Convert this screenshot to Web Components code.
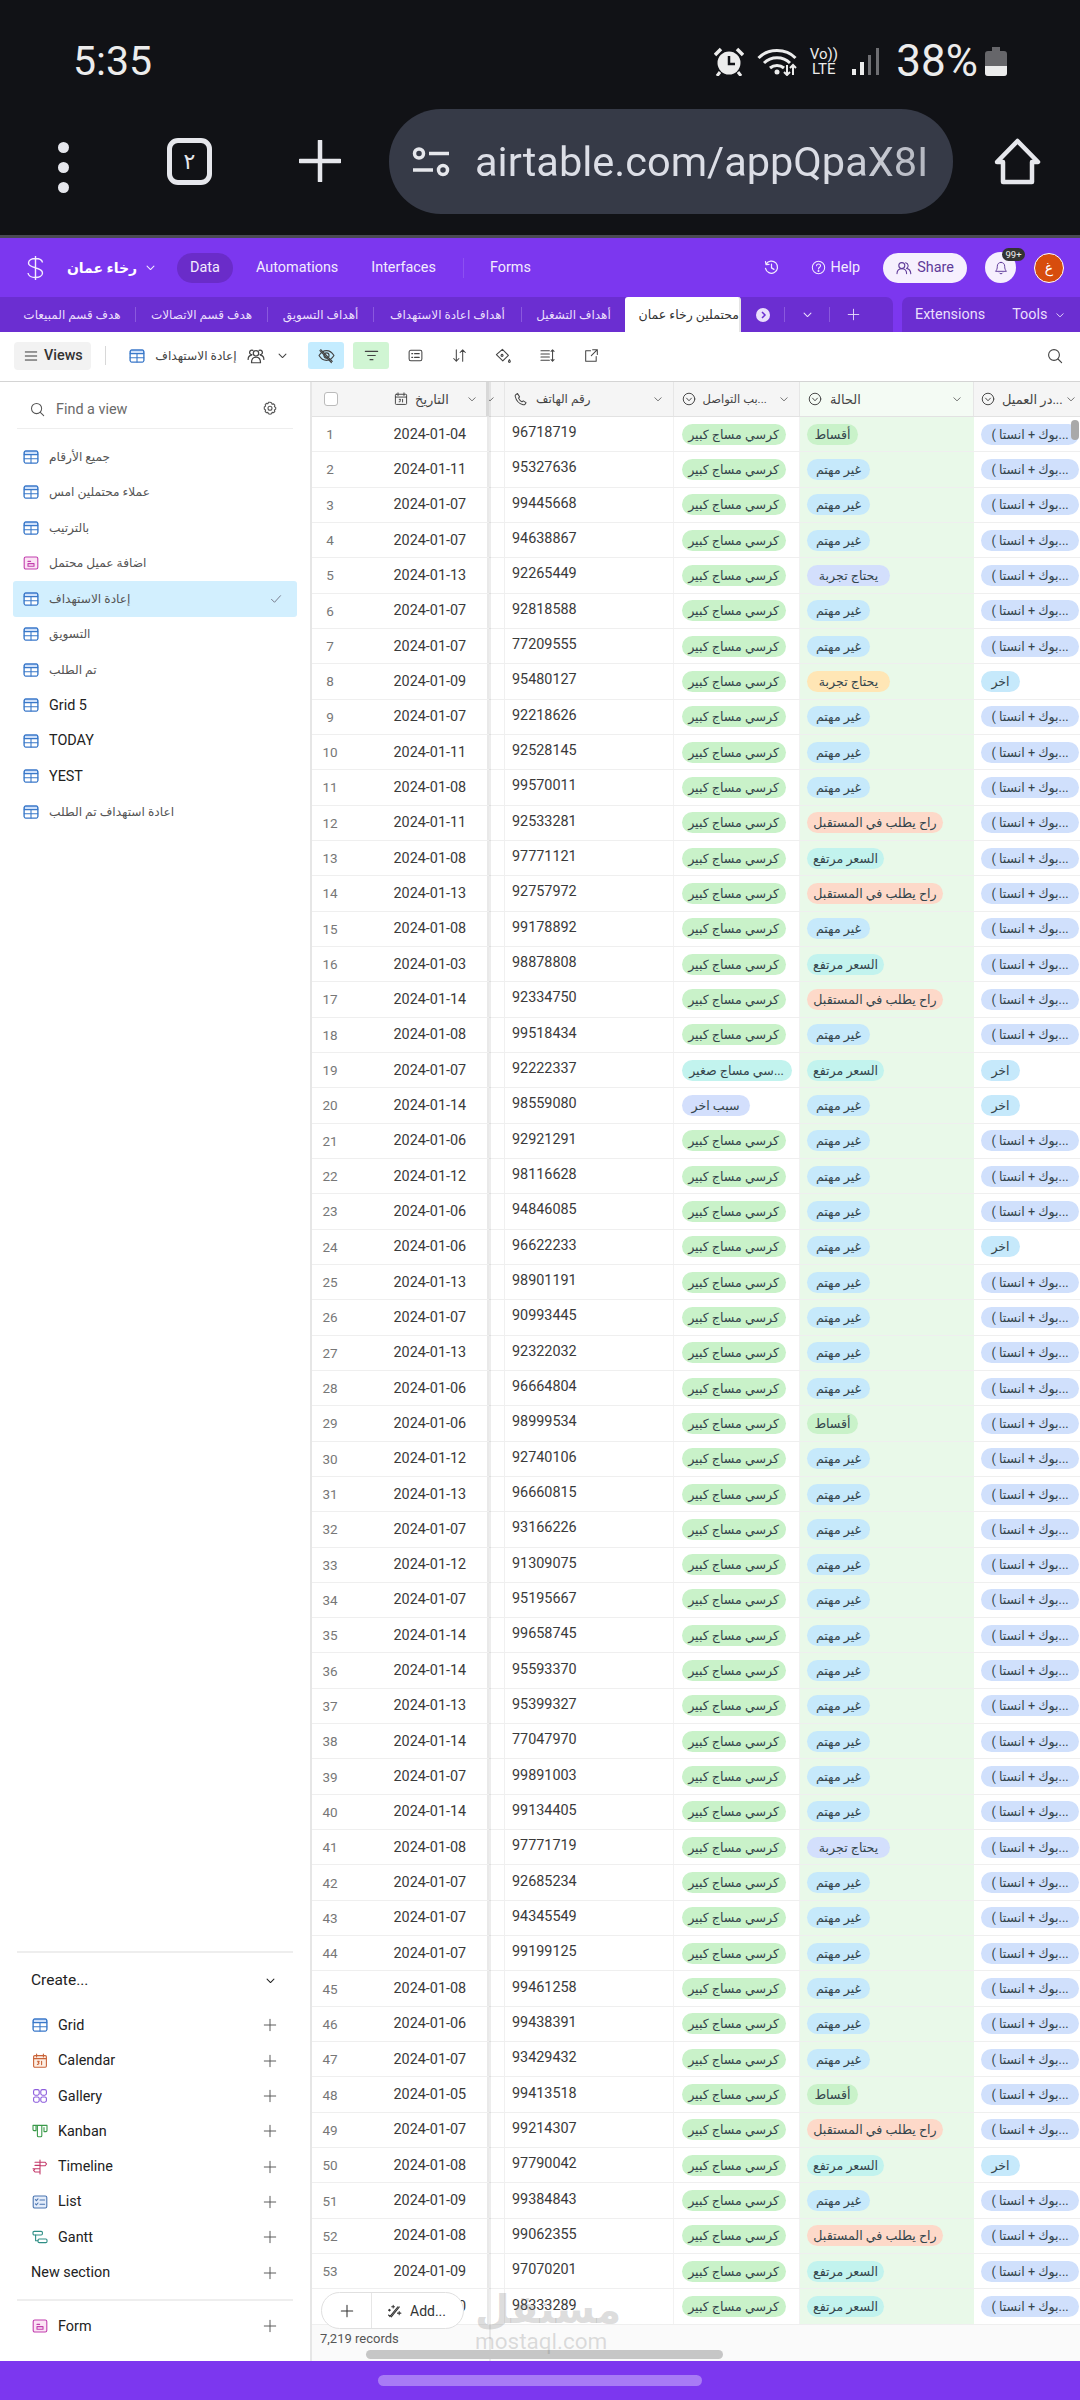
<!DOCTYPE html>
<html lang="en">
<head>
<meta charset="utf-8">
<title>Airtable</title>
<style>
html, body { margin: 0; padding: 0; background: #fff; }
body {
    width: 1080px;
    height: 2400px;
    overflow: hidden;
    display: flex;
    flex-direction: column;
    font-family: Roboto, "DejaVu Sans", sans-serif;
    font-size: 14.4px;
    color: #333;
}
.main { flex: 1; display: flex; min-height: 0; }
</style>
</head>
<body>
<status-bar></status-bar>
<browser-bar></browser-bar>
<base-header></base-header>
<table-tabs></table-tabs>
<view-toolbar></view-toolbar>
<div class="main">
    <view-sidebar></view-sidebar>
    <data-grid></data-grid>
</div>
<nav-handle></nav-handle>

<script>
const ICONS = {
    chevron: '<path d="M3 6l5 5 5-5"/>',
    plus: '<path d="M8 1.5v13M1.5 8h13"/>',
    search: '<circle cx="7" cy="7" r="5.4"/><path d="M11 11l3.6 3.6"/>',
    gear: '<path d="M8 1.3l1.5.5.6 1.4 1.5-.3 1.2 1.2-.4 1.5 1.3.9v1.6l-1.3.9.4 1.5-1.2 1.2-1.5-.3-.6 1.4-1.5.5-1.5-.5-.6-1.4-1.5.3-1.2-1.2.4-1.5-1.3-.9V6l1.3-.9-.4-1.5 1.2-1.2 1.5.3.6-1.4z"/><circle cx="8" cy="7.3" r="2"/>',
    grid: '<rect x="1.2" y="2" width="13.6" height="12" rx="1.4" fill="#cfe1fb"/><rect x="1.2" y="5.4" width="13.6" height="8.6" fill="#fff" stroke="none"/><rect x="1.2" y="2" width="13.6" height="12" rx="1.4"/><path d="M1.2 5.6h13.6M1.2 9.8h13.6M8 5.6V14"/>',
    form: '<rect x="1.2" y="2" width="13.6" height="12" rx="1.6" fill="#fbe3f4"/><path d="M5 8.6h6v2.6H5zM5 6.4h2.6"/>',
    calendar: '<rect x="1.6" y="2.6" width="12.8" height="11.6" rx="1.2" fill="#fdeee3"/><path d="M1.6 5.6h12.8M4.6 1v3M11.4 1v3M5.4 8.2h1.8l-1 1.4c1 0 1.2 1.8-.8 1.8M9.6 8.2v3.4"/>',
    gallery: '<rect x="1.6" y="1.6" width="5.6" height="5.6" rx="1.6"/><rect x="8.8" y="1.6" width="5.6" height="5.6" rx="1.6"/><rect x="1.6" y="9" width="5.6" height="5.2" rx="1.6"/><rect x="8.8" y="9" width="5.6" height="5.2" rx="1.6"/>',
    kanban: '<path d="M1 2.4h14v5.2c0 .6-.4 1-1 1h-2v-4M1 2.4v4.2c0 .6.4 1 1 1h2V2.4M5.4 2.4v10.4c0 .6.4 1 1 1h2.4c.6 0 1-.4 1-1V2.4"/>',
    timeline: '<path d="M8 1v14M3 3.2h10l1.6 1.8L13 6.8H8M1 9.8h2l-1.4 1.6 1.4 1.6h5M3 9.8h5"/><path d="M3 6.4h5"/>',
    list: '<rect x="1.2" y="2" width="13.6" height="12" rx="1.6" fill="#e3ecfa"/><path d="M3.4 5.6l1 1 1.6-1.8M8 6h4.6M3.4 9.8l1 1 1.6-1.8M8 10.2h4.6"/>',
    gantt: '<rect x="1" y="2.4" width="9.4" height="3.6" rx="1.2"/><rect x="6" y="10" width="9" height="3.6" rx="1.2"/><path d="M3.6 6v5.8H6"/>',
    circleDown: '<circle cx="8" cy="8" r="6.6"/><path d="M5.2 7l2.8 3 2.8-3"/>',
    phone: '<path d="M4.8 1.6L3 2.8c-.6.5-.8 1.3-.6 2 .9 4 4.4 7.7 8.4 8.8.8.2 1.6-.1 2.1-.7l1-1.5-3-2-1.3 1.1c-1.6-.8-3-2.4-3.7-4l1.1-1.3z"/>',
    cal31: '<rect x="1.6" y="2.6" width="12.8" height="11.6" rx="1"/><path d="M1.6 5.8h12.8M4.6 1v3M11.4 1v3M6 8.4H7.6L6.8 9.6c1 0 1 1.6-.9 1.6M9.8 8.4v3"/>',
    help: '<circle cx="8" cy="8" r="6.6"/><path d="M5.9 6.2c0-2.7 4.3-2.7 4.3-.1 0 1.7-2.2 1.6-2.2 3.5"/><circle cx="8" cy="11.8" r=".5"/>',
    history: '<path d="M2.3 4.4A6.5 6.5 0 1 1 1.6 9M1.6 1.8l.6 3.2 3.2-.4M8 4.4v4l2.6 1.6"/>',
    people: '<circle cx="5.8" cy="5.6" r="3"/><path d="M1 13.6c0-3 2-5 4.8-5s4.8 2 4.8 5M9.6 2.8a3 3 0 0 1 1 5.6c2.4.5 4 2.4 4.2 5.2"/>',
    peopleSet: '<circle cx="8" cy="5.6" r="2.4"/><path d="M4 14c0-3.6 1.6-5 4-5s4 1.4 4 5zM4.4 6.8a2 2 0 1 1 .8-3.8M11.6 6.8a2 2 0 1 0-.8-3.8M1 11c0-2 1-3.4 3-3.8M15 11c0-2-1-3.4-3-3.8"/>',
    bell: '<path d="M8 1.6c-2.8 0-4.2 2-4.2 4.4 0 3-.8 4.4-2 5.8h12.4c-1.2-1.4-2-2.8-2-5.8 0-2.4-1.4-4.4-4.2-4.4zM6.2 13.8c.6 1.2 3 1.2 3.6 0"/>',
    eyeOff: '<path d="M1 8c1.8-3 4.2-4.6 7-4.6S13.2 5 15 8c-1.8 3-4.2 4.6-7 4.6S2.8 11 1 8z"/><circle cx="8" cy="8" r="2.4"/><path d="M2.6 2.4l10.8 11.2M1.8 3.4l10.8 11.2"/>',
    filter: '<path d="M1.5 3.6h13M4 8h8M6.5 12.4h3"/>',
    fields: '<rect x="1.2" y="2.4" width="13.6" height="11.2" rx="1.8"/><path d="M4 6h1M7 6h5M4 10h1M7 10h5"/>',
    sort: '<path d="M4.6 2v12M1.8 11.2L4.6 14l2.8-2.8M11.4 14V2M8.6 4.8L11.4 2l2.8 2.8"/>',
    paint: '<path d="M7.4 1.4l6 6-5.6 5.4-6.4-6.2zM7 6.4a1 1 0 1 0 .1 0z"/><path d="M14.4 11.6c.6 1 .9 1.4.9 1.9a.9.9 0 0 1-1.8 0c0-.5.3-.9.9-1.900z"/>',
    height: '<path d="M1 3h9M1 6.3h9M1 9.7h9M1 13h9M13.4 2v12M11.8 3.6L13.4 2 15 3.6M11.8 12.4L13.4 14 15 12.4"/>',
    share: '<path d="M7 3H1.8v11.2H13V9M9.2 1.8h5v5M14.2 1.8L7.8 8.2"/>',
    wand: '<path d="M3 14.6L11.6 4M4.6 14.8l8.600-10.600M1.600 12.800l1.800 1.600M6.600 2.400v3M5 4h3M13 9v3.600M11.200 10.800h3.600M2.600 6.600v2M1.600 7.600h2"/>',
    menu: '<path d="M1.5 3.4h13M1.5 8h13M1.5 12.6h13"/>',
    check: '<path d="M2 8.4l4 4 8-8.800"/>'
};

class UiIcon extends HTMLElement {
    connectedCallback() {
        const size = Number(this.getAttribute('size') || 16);
        const name = this.getAttribute('name');
        // small icons need a heavier stroke to survive the 16 unit viewBox
        const sw = this.getAttribute('stroke') || (size <= 11 ? 1.5 : 1.1);
        this.attachShadow({mode: 'open'}).innerHTML = `
            <style>:host { display: inline-flex; flex: none; width: ${size}px; height: ${size}px; }</style>
            <svg width="${size}" height="${size}" viewBox="0 0 16 16" fill="none" stroke="currentColor"
                 stroke-width="${sw}" stroke-linecap="round" stroke-linejoin="round">${ICONS[name] || ''}</svg>`;
    }
}
customElements.define('ui-icon', UiIcon);

class StatusBar extends HTMLElement {
    constructor() {
        super();
        this.attachShadow({mode: 'open'}).innerHTML = `
        <style>
        :host { display: flex; height: 109px; background: #111216; color: #ececec; box-sizing: border-box; padding: 47px 73px 0 73px; }
        .t { font-size: 41px; line-height: 29px; }
        .r { margin-left: auto; display: flex; height: 29px; align-items: flex-start; }
        svg { display: block; }
        .lte { font-size: 15px; line-height: 15px; width: 31px; margin-left: 9px; text-align: center; white-space: nowrap; }
        .bat { margin-left: 7px; }
        </style>
        <div class="t">5:35</div>
        <div class="r">
            <svg width="30" height="29" viewBox="0 0 30 29">
                <circle cx="15" cy="16" r="11.5" fill="#ececec"/>
                <path d="M15 9v8h6" fill="none" stroke="#111216" stroke-width="2.5"/>
                <path d="M1 8l6-6M29 8l-6-6" stroke="#ececec" stroke-width="3.5"/>
                <path d="M6 25l-3 4M24 25l3 4" stroke="#ececec" stroke-width="3"/>
            </svg>
            <svg style="margin-left:13px" width="42" height="29" viewBox="0 0 42 29" fill="none" stroke="#ececec" stroke-width="3">
                <path d="M1.5 11C11 1 29 1 38.5 11M7 16c7-7 19-7 26 0M13 21c4-3.5 10-3.5 14 0"/>
                <circle cx="20" cy="25" r="2.5" fill="#ececec" stroke="none"/>
                <path d="M30 18v10M27 25l3 3 3-3M36 28V18M33 21l3-3 3 3" stroke-width="2"/>
            </svg>
            <div class="lte">Vo))<br>LTE</div>
            <svg style="margin-left:13px" width="28" height="29" viewBox="0 0 28 29">
                <rect x="0" y="22" width="4" height="6" fill="#ececec"/>
                <rect x="8" y="15" width="4" height="13" fill="#ececec"/>
                <rect x="16" y="8" width="3" height="20" fill="#6e6e72"/>
                <rect x="24" y="1" width="3" height="27" fill="#6e6e72"/>
            </svg>
            <div class="t" style="margin-left:16px;font-size:44px">38%</div>
            <svg class="bat" width="22" height="29" viewBox="0 0 22 29">
                <path d="M7 0h8v4h4a3 3 0 0 1 3 3v19a3 3 0 0 1-3 3H3a3 3 0 0 1-3-3V7a3 3 0 0 1 3-3h4z" fill="#66666a"/>
                <path d="M0 19h22v7a3 3 0 0 1-3 3H3a3 3 0 0 1-3-3z" fill="#ececec"/>
            </svg>
        </div>`;
    }
}
customElements.define('status-bar', StatusBar);

class BrowserBar extends HTMLElement {
    constructor() {
        super();
        this.attachShadow({mode: 'open'}).innerHTML = `
        <style>
        :host { display: flex; height: 129px; background: #111216; box-sizing: border-box; padding-left: 56px; border-bottom: 3px solid #4a4a54; color: #e6e7ec; }
        .dots { width: 14px; margin-top: 33px; display: flex; flex-direction: column; gap: 9px; align-items: center; }
        .dots i { width: 11px; height: 11px; border-radius: 50%; background: #e6e7ec; display: block; }
        .tabs { width: 45px; height: 47px; margin: 29px 0 0 97px; box-sizing: border-box; border: 5px solid #e6e7ec; border-radius: 11px;
                display: flex; align-items: center; justify-content: center; font-size: 22px; line-height: 1; font-weight: 500; }
        .plus { margin: 31px 0 0 87px; width: 42px; height: 42px; }
        .url { margin-left: 48px; width: 564px; height: 105px; border-radius: 52px; background: #363a47; box-sizing: border-box; padding: 0 19px 0 23px; display: flex; align-items: center; }
        .txt { margin-left: 25px; flex: 1; overflow: hidden; white-space: nowrap; font-size: 41.5px; line-height: 60px; color: #dcdee6;
               -webkit-mask-image: linear-gradient(to right, #000 75%, rgba(0,0,0,.75)); mask-image: linear-gradient(to right, #000 75%, rgba(0,0,0,.75)); }
        .home { margin: 29px 0 0 41px; }
        </style>
        <div class="dots"><i></i><i></i><i></i></div>
        <div class="tabs">٢</div>
        <svg class="plus" viewBox="0 0 42 42"><path d="M21 1v40M1 21h40" stroke="#e6e7ec" stroke-width="4.5" stroke-linecap="round"/></svg>
        <div class="url">
            <svg width="38" height="30" viewBox="0 0 38 30" fill="none" stroke="#e6e7ec" stroke-width="3.5">
                <circle cx="7" cy="6.5" r="4.5"/><path d="M17 6.5h20M1 23h20"/><circle cx="31" cy="23" r="4.5"/>
            </svg>
            <div class="txt">airtable.com/appQpaX8I</div>
        </div>
        <svg class="home" width="47" height="47" viewBox="0 0 47 47" fill="none" stroke="#e6e7ec" stroke-width="4.5" stroke-linejoin="round">
            <path d="M23.5 3L44 24h-6v20H9V24H3z"/>
        </svg>`;
    }
}
customElements.define('browser-bar', BrowserBar);

class BaseHeader extends HTMLElement {
    constructor() {
        super();
        this.attachShadow({mode: 'open'}).innerHTML = `
        <style>
        :host { display: flex; align-items: center; height: 59px; background: #7c37ef; color: #f3ecfe; box-sizing: border-box; padding: 0 16px 0 27px; font-size: 14.4px; }
        .name { margin-left: 23px; width: 70px; font-weight: 700; font-size: 14px; white-space: nowrap; color: #fff; display: flex; justify-content: center; }
        .nav { height: 30px; display: flex; align-items: center; }
        .data { background: #6a2cc9; border-radius: 15px; width: 56px; justify-content: center; margin-left: 21px; }
        .sep { width: 1px; height: 20px; background: #8c50f1; margin-left: 27px; }
        .right { margin-left: auto; display: flex; align-items: center; }
        .share { margin-left: 23px; width: 84px; height: 30px; border-radius: 15px; background: #f6f0fe; color: #5f3b99; display: flex; align-items: center; gap: 5px; justify-content: center; box-sizing: border-box; }
        .bell { margin-left: 18px; width: 31px; height: 31px; border-radius: 50%; background: #f6f0fe; color: #5f3b99; display: flex; align-items: center; justify-content: center; position: relative; }
        .badge { position: absolute; left: 17px; top: -4px; width: 23px; height: 13px; border-radius: 7px; background: #333; color: #eee; font-size: 9.5px; line-height: 13px; text-align: center; }
        .av { margin-left: 18px; width: 28px; height: 28px; border: 1px solid #fff; border-radius: 50%; background: #d74d0d; color: #fff; font-size: 14px; display: flex; align-items: center; justify-content: center; }
        </style>
        <svg width="17" height="24" viewBox="0 0 17 24" fill="none" stroke="#f3ecfe" stroke-width="1.4"><path d="M15.5 6.5C15 3.5 12 2.5 8.5 2.5S1.5 4 1.5 7c0 6 14 3.5 14 10 0 3-3.5 4.5-7 4.5S1.5 20 1 17M8.5 0v24"/></svg>
        <div class="name" dir="rtl">رخاء عمان</div>
        <ui-icon name="chevron" size="11" style="margin-left:8px"></ui-icon>
        <div class="nav data">Data</div>
        <div class="nav" style="margin-left:23px">Automations</div>
        <div class="nav" style="margin-left:33px">Interfaces</div>
        <div class="sep"></div>
        <div class="nav" style="margin-left:26px">Forms</div>
        <div class="right">
            <ui-icon name="history" size="15" stroke="1.3"></ui-icon>
            <ui-icon name="help" size="15" style="margin-left:32px"></ui-icon>
            <div style="margin-left:5px">Help</div>
            <div class="share"><ui-icon name="people" size="16"></ui-icon>Share</div>
            <div class="bell"><ui-icon name="bell" size="14"></ui-icon><div class="badge">99+</div></div>
            <div class="av">غ</div>
        </div>`;
    }
}
customElements.define('base-header', BaseHeader);

class TableTabs extends HTMLElement {
    constructor() {
        super();
        const names = [['هدف قسم المبيعات', 126], ['هدف قسم الاتصالات', 131], ['أهداف التسويق', 105], ['أهداف اعادة الاستهداف', 147], ['أهداف التشغيل', 103]];
        const tabs = names.map(([n, w], i) => `${i ? '<div class="sep"></div>' : ''}<div class="tab" dir="rtl" style="width:${w}px">${n}</div>`).join('');
        this.attachShadow({mode: 'open'}).innerHTML = `
        <style>
        :host { display: flex; height: 35px; background: #7c37ef; color: #eadffc; font-size: 12px; }
        .a { width: 893px; background: #6b2ed1; border-radius: 0 7px 0 0; display: flex; align-items: center; padding-left: 9px; box-sizing: border-box; white-space: nowrap; }
        .tab { display: flex; justify-content: center; flex: none; box-sizing: border-box; }
        .sep { width: 1px; height: 15px; background: #8a58de; flex: none; }
        .on { width: 116px; height: 35px; flex: none; background: #fff; color: #333; border-radius: 3px 3px 0 0; border-right: 2px solid #e4e4e4; box-sizing: border-box; font-size: 12.5px;
              display: flex; align-items: center; justify-content: flex-start; overflow: hidden; direction: rtl; }
        .dot { margin-left: 15px; width: 14px; height: 14px; border-radius: 50%; background: #eadffc; color: #6b2ed1; display: flex; align-items: center; justify-content: center; }
        .b { margin-left: 9px; flex: 1; background: #6b2ed1; border-radius: 7px 0 0 0; display: flex; align-items: center; padding-left: 13px; font-size: 14.4px; }
        </style>
        <div class="a">
            ${tabs}
            <div class="on">محتملين رخاء عمان</div>
            <div class="dot"><svg width="8" height="8" viewBox="0 0 8 8" fill="none" stroke="currentColor" stroke-width="1.5"><path d="M3 1l3 3-3 3"/></svg></div>
            <div class="sep" style="margin-left:14px"></div>
            <ui-icon name="chevron" size="11" style="margin-left:17px"></ui-icon>
            <div class="sep" style="margin-left:16px"></div>
            <ui-icon name="plus" size="13" style="margin-left:17px"></ui-icon>
        </div>
        <div class="b">
            <div>Extensions</div>
            <div style="margin-left:27px">Tools</div>
            <ui-icon name="chevron" size="10" style="margin-left:8px"></ui-icon>
        </div>`;
    }
}
customElements.define('table-tabs', TableTabs);

class ViewToolbar extends HTMLElement {
    constructor() {
        super();
        this.attachShadow({mode: 'open'}).innerHTML = `
        <style>
        :host { display: flex; align-items: center; height: 50px; box-sizing: border-box; padding: 0 0 2px 14px; background: #fff; border-bottom: 1.5px solid #d4d4d4; color: #444; }
        .views { width: 77px; height: 28px; background: #f2f2f2; border-radius: 4px; display: flex; align-items: center; gap: 6px; padding-left: 10px; box-sizing: border-box; font-weight: 500; color: #333; }
        .sep { width: 1px; height: 19px; background: #d8d8d8; margin-left: 14px; }
        .nm { width: 84px; margin-left: 9px; font-size: 12.2px; white-space: nowrap; display: flex; justify-content: center; }
        .btn { width: 36px; height: 27px; border-radius: 3px; display: flex; align-items: center; justify-content: center; }
        .ic { width: 44px; display: flex; justify-content: center; }
        </style>
        <div class="views"><ui-icon name="menu" size="14"></ui-icon>Views</div>
        <div class="sep"></div>
        <ui-icon name="grid" size="16" style="margin-left:23px;color:#3a79c9"></ui-icon>
        <div class="nm" dir="rtl">إعادة الاستهداف</div>
        <ui-icon name="peopleSet" size="18" style="margin-left:9px"></ui-icon>
        <ui-icon name="chevron" size="11" style="margin-left:12px"></ui-icon>
        <div class="btn" style="margin-left:20px;background:#c4ecff"><ui-icon name="eyeOff" size="17"></ui-icon></div>
        <div class="btn" style="margin-left:9px;background:#d0f5d3"><ui-icon name="filter" size="15" stroke="1.3"></ui-icon></div>
        <div class="ic" style="margin-left:4px"><ui-icon name="fields" size="15"></ui-icon></div>
        <div class="ic"><ui-icon name="sort" size="15"></ui-icon></div>
        <div class="ic"><ui-icon name="paint" size="16"></ui-icon></div>
        <div class="ic"><ui-icon name="height" size="15"></ui-icon></div>
        <div class="ic"><ui-icon name="share" size="15"></ui-icon></div>
        <ui-icon name="search" size="16" style="margin-left:auto;margin-right:17px"></ui-icon>`;
    }
}
customElements.define('view-toolbar', ViewToolbar);

class ViewSidebar extends HTMLElement {
    constructor() {
        super();
        const views = [
            ['grid', 'جميع الأرقام'], ['grid', 'عملاء محتملين امس'], ['grid', 'بالترتيب'], ['form', 'اضافة عميل محتمل'],
            ['grid', 'إعادة الاستهداف', 1], ['grid', 'التسويق'], ['grid', 'تم الطلب'], ['grid', 'Grid 5'], ['grid', 'TODAY'],
            ['grid', 'YEST'], ['grid', 'اعادة استهداف تم الطلب']
        ];
        const colors = {grid: '#3a79c9', form: '#c23fae', calendar: '#c9643a', gallery: '#8c5cdc', kanban: '#3a9a4a', timeline: '#c43a6a', list: '#4a74b0', gantt: '#2f8f86'};
        const viewRows = views.map(([ic, t, on]) => `
            <div class="v${on ? ' on' : ''}">
                <ui-icon name="${ic}" size="16" style="color:${colors[ic]}"></ui-icon>
                <span class="${/[a-z]/i.test(t) ? 'lat' : ''}">${t}</span>
                ${on ? '<ui-icon name="check" size="12" style="margin-left:auto;margin-right:15px;color:#667"></ui-icon>' : ''}
            </div>`).join('');
        const make = ['grid:Grid', 'calendar:Calendar', 'gallery:Gallery', 'kanban:Kanban', 'timeline:Timeline', 'list:List', 'gantt:Gantt'];
        const makeRows = make.map(m => {
            const [ic, t] = m.split(':');
            return `<div class="c"><ui-icon name="${ic}" size="16" style="color:${colors[ic]}"></ui-icon><span>${t}</span><ui-icon class="p" name="plus" size="14"></ui-icon></div>`;
        }).join('');
        this.attachShadow({mode: 'open'}).innerHTML = `
        <style>
        :host { display: flex; flex-direction: column; flex: none; width: 312px; box-sizing: border-box; border-right: 2px solid #e6e6e6; background: #fff; color: #555; }
        .find { margin: 0 17px; height: 47px; padding: 8px 15px 0 13px; box-sizing: border-box; display: flex; align-items: center; border-bottom: 1px solid #eee; color: #555; }
        .find span { margin-left: 11px; color: #6a6a6a; }
        .list { margin-top: 10px; }
        .v { height: 35.5px; margin-left: 13px; width: 284px; box-sizing: border-box; padding-left: 10px; display: flex; align-items: center; border-radius: 3px; }
        .v span { margin-left: 10px; font-size: 12.2px; }
        .v .lat { font-size: 14.4px; color: #222; }
        .on { background: #d2effe; }
        .bot { margin-top: auto; margin-left: 17px; width: 276px; padding-bottom: 17px; }
        .hr { height: 1.5px; background: #eee; }
        .cr { height: 55px; display: flex; align-items: center; padding: 0 16px 0 14px; font-size: 15.5px; color: #222; }
        .c { height: 35.3px; display: flex; align-items: center; padding-left: 15px; color: #222; }
        .c span { margin-left: 10px; }
        .ns { padding-left: 14px; }
        .ns span { margin-left: 0; }
        .p { margin-left: auto; margin-right: 16px; color: #555; }
        </style>
        <div class="find"><ui-icon name="search" size="15"></ui-icon><span>Find a view</span><ui-icon name="gear" size="16" style="margin-left:auto"></ui-icon></div>
        <div class="list">${viewRows}</div>
        <div class="bot">
            <div class="hr"></div>
            <div class="cr"><span>Create...</span><ui-icon name="chevron" size="11" style="margin-left:auto;margin-right:1px"></ui-icon></div>
            <div style="margin-top:-10px;height:10px"></div>
            ${makeRows}
            <div class="c ns"><span>New section</span><ui-icon class="p" name="plus" size="14"></ui-icon></div>
            <div class="hr" style="margin-top:9px;margin-bottom:8px"></div>
            <div class="c"><ui-icon name="form" size="16" style="color:#c23fae"></ui-icon><span>Form</span><ui-icon class="p" name="plus" size="14"></ui-icon></div>
        </div>`;
    }
}
customElements.define('view-sidebar', ViewSidebar);

class SelectPill extends HTMLElement {
    constructor() {
        super();
        this.attachShadow({mode: 'open'}).innerHTML = `
        <style>
        :host { display: inline-flex; align-items: center; justify-content: center; flex: none; height: 21px; border-radius: 11px; box-sizing: border-box; font-size: 12.6px; white-space: nowrap; direction: rtl; color: #34454c; background: var(--pill, #ddd); }
        </style><slot></slot>`;
    }
}
customElements.define('select-pill', SelectPill);

const COLS = '177px 16px 168.5px 126.5px 174px 1fr';

class GridRow extends HTMLElement {
    constructor() {
        super();
        this.attachShadow({mode: 'open'}).innerHTML = `
        <style>
        :host { display: grid; grid-template-columns: ${COLS}; height: 35.33px; box-sizing: border-box; border-bottom: 1px solid #efefef; background: #fff; font-size: 14.4px; color: #3a3a3a; }
        .f { display: flex; align-items: center; border-right: 2px solid #e9e9e9; box-sizing: border-box; }
        .n { width: 36px; text-align: center; color: #777; font-size: 13.5px; }
        .d { margin-left: 45.5px; }
        .g { border-right: 1px solid #f0f0f0; }
        .c { display: flex; align-items: center; box-sizing: border-box; overflow: hidden; border-right: 1px solid #f2f2f2; }
        .ph { padding: 0 0 3px 7px; }
        .re { padding-left: 8px; }
        .st { padding-left: 7px; background: #e9f9e9; border-right: none; }
        .so { padding-left: 7px; border-right: none; }
        </style>
        <div class="f"><div class="n"><slot name="n"></slot></div><div class="d"><slot name="d"></slot></div></div>
        <div class="g"></div>
        <div class="c ph"><slot name="p"></slot></div>
        <div class="c re"><slot name="r"></slot></div>
        <div class="c st"><slot name="s"></slot></div>
        <div class="c so"><slot name="o"></slot></div>`;
    }
}
customElements.define('grid-row', GridRow);

const PILLS = {
    big: ['كرسي مساج كبير', '#c9f2c9', 104],
    small: ['...سي مساج صغير', '#c2f3ee', 110],
    other: ['سبب اخر', '#d3dffc', 68],
    m: ['غير مهتم', '#c6e9fb', 63],
    a: ['أقساط', '#c9f2c9', 51],
    t: ['يحتاج تجربة', '#d3dffc', 83],
    y: ['يحتاج تجربة', '#ffe6b5', 83],
    r: ['راح يطلب في المستقبل', '#fdd9c9', 136],
    h: ['السعر مرتفع', '#c2f3ee', 77],
    fb: ['...بوك + انستا )', '#d0e0fc', 98],
    o: ['اخر', '#c6e9fb', 39]
};
// date suffix (month-day), phone, status, and reason/source only when they differ
const ROWS = [
    ['04', '96718719', 'a'], ['11', '95327636'], ['07', '99445668'], ['07', '94638867'], ['13', '92265449', 't'],
    ['07', '92818588'], ['07', '77209555'], ['09', '95480127', 'y', 'big', 'o'], ['07', '92218626'], ['11', '92528145'],
    ['08', '99570011'], ['11', '92533281', 'r'], ['08', '97771121', 'h'], ['13', '92757972', 'r'], ['08', '99178892'],
    ['03', '98878808', 'h'], ['14', '92334750', 'r'], ['08', '99518434'], ['07', '92222337', 'h', 'small', 'o'], ['14', '98559080', 'm', 'other', 'o'],
    ['06', '92921291'], ['12', '98116628'], ['06', '94846085'], ['06', '96622233', 'm', 'big', 'o'], ['13', '98901191'],
    ['07', '90993445'], ['13', '92322032'], ['06', '96664804'], ['06', '98999534', 'a'], ['12', '92740106'],
    ['13', '96660815'], ['07', '93166226'], ['12', '91309075'], ['07', '95195667'], ['14', '99658745'],
    ['14', '95593370'], ['13', '95399327'], ['14', '77047970'], ['07', '99891003'], ['14', '99134405'],
    ['08', '97771719', 't'], ['07', '92685234'], ['07', '94345549'], ['07', '99199125'], ['08', '99461258'],
    ['06', '99438391'], ['07', '93429432'], ['05', '99413518', 'a'], ['07', '99214307', 'r'], ['08', '97790042', 'h', 'big', 'o'],
    ['09', '99384843'], ['08', '99062355', 'r'], ['09', '97070201', 'h'], ['10', '98333289', 'h']
];

function pill(code, slot) {
    const [text, color, w] = PILLS[code];
    return `<select-pill slot="${slot}" style="--pill:${color};width:${w}px">${text}</select-pill>`;
}

class DataGrid extends HTMLElement {
    constructor() {
        super();
        const rows = ROWS.map((r, i) => `
            <grid-row>
                <span slot="n">${i + 1}</span>
                <span slot="d">2024-01-${r[0]}</span>
                <span slot="p">${r[1]}</span>
                ${pill(r[3] || 'big', 'r')}
                ${pill(r[2] || 'm', 's')}
                ${pill(r[4] || 'fb', 'o')}
            </grid-row>`).join('');
        this.attachShadow({mode: 'open'}).innerHTML = `
        <style>
        :host { display: flex; flex-direction: column; flex: 1; min-width: 0; position: relative; overflow: hidden; background: #fafafa; }
        .hd { display: grid; grid-template-columns: ${COLS}; height: 35px; flex: none; box-sizing: border-box; background: #f5f5f5; border-bottom: 1.5px solid #e2e2e2; font-size: 13px; color: #444; }
        .hc { display: flex; align-items: center; box-sizing: border-box; border-right: 1px solid #e6e6e6; position: relative; white-space: nowrap; overflow: hidden; }
        .hc .ch { position: absolute; color: #666; }
        .box { width: 12px; height: 12px; border: 1.2px solid #bbb; border-radius: 3px; background: #fff; margin-left: 12px; }
        .rows { flex: none; }
        .ft { flex: 1; padding-left: 8px; font-size: 13px; display: flex; align-items: center; color: #555; height: 36px; padding-bottom: 8px; box-sizing: border-box; }
        .hs { position: absolute; left: 54px; bottom: 2px; width: 357px; height: 9px; border-radius: 5px; background: #c6c6c6; }
        .vs { position: absolute; right: 1px; top: 38px; width: 8px; height: 20px; border-radius: 4px; background: #a9a9a9; }
        .sh { position: absolute; left: 177px; top: 0; bottom: 0; width: 2px; background: rgba(0,0,0,.07); }
        .add { position: absolute; left: 9px; top: 1910px; width: 143px; height: 37px; border-radius: 19px; background: #fff; border: 1px solid #e0e0e0; box-sizing: border-box; display: flex; align-items: center; color: #333; font-size: 14px; }
        .add .pl { width: 50px; height: 100%; display: flex; align-items: center; justify-content: center; border-right: 1px solid #e6e6e6; box-sizing: border-box; }
        .wm { position: absolute; left: 163px; top: 1908px; width: 130px; text-align: center; color: rgba(120,120,120,.25); pointer-events: none; }
        .wm b { display: block; font-size: 40px; line-height: 40px; font-weight: 900; }
        .wm span { display: block; font-size: 22.5px; line-height: 22px; }
        </style>
        <div class="hd">
            <div class="hc" style="border-right:3px solid #d8d8d8">
                <div class="box"></div>
                <ui-icon name="cal31" size="14" style="margin-left:56px"></ui-icon>
                <span style="margin-left:7px" dir="rtl">التاريخ</span>
                <ui-icon class="ch" name="chevron" size="10" style="left:155px"></ui-icon>
            </div>
            <div class="hc"><ui-icon class="ch" name="chevron" size="10" style="left:-4px"></ui-icon></div>
            <div class="hc">
                <ui-icon name="phone" size="15" style="margin-left:8px"></ui-icon>
                <span style="margin-left:8px;font-size:12px" dir="rtl">رقم الهاتف</span>
                <ui-icon class="ch" name="chevron" size="10" style="left:148px"></ui-icon>
            </div>
            <div class="hc">
                <ui-icon name="circleDown" size="14" style="margin-left:8px"></ui-icon>
                <span style="margin-left:7px;font-size:11.5px" dir="rtl">...بب التواصل</span>
                <ui-icon class="ch" name="chevron" size="10" style="left:105px"></ui-icon>
            </div>
            <div class="hc" style="background:#f4fbf4">
                <ui-icon name="circleDown" size="14" style="margin-left:8px"></ui-icon>
                <span style="margin-left:8px" dir="rtl">الحالة</span>
                <ui-icon class="ch" name="chevron" size="10" style="left:152px"></ui-icon>
            </div>
            <div class="hc" style="border-right:none">
                <ui-icon name="circleDown" size="14" style="margin-left:7px"></ui-icon>
                <span style="margin-left:7px" dir="rtl">...در العميل</span>
                <ui-icon class="ch" name="chevron" size="10" style="left:92px"></ui-icon>
            </div>
        </div>
        <div class="rows">${rows}</div>
        <div class="ft">7,219 records</div>
        <div class="sh"></div>
        <div class="vs"></div>
        <div class="hs"></div>
        <div class="add">
            <div class="pl"><ui-icon name="plus" size="14" stroke="1.2"></ui-icon></div>
            <ui-icon name="wand" size="15" style="margin-left:15px"></ui-icon>
            <span style="margin-left:8px">Add...</span>
        </div>
        <div class="wm"><b>مستقل</b><span>mostaql.com</span></div>`;
    }
}
customElements.define('data-grid', DataGrid);

class NavHandle extends HTMLElement {
    constructor() {
        super();
        this.attachShadow({mode: 'open'}).innerHTML = `
        <style>
        :host { display: block; flex: none; height: 39px; background: #7c37ef; padding-top: 14px; box-sizing: border-box; }
        div { margin-left: 378px; width: 324px; height: 11px; border-radius: 6px; background: #a87bf5; }
        </style><div></div>`;
    }
}
customElements.define('nav-handle', NavHandle);
</script>
</body>
</html>
